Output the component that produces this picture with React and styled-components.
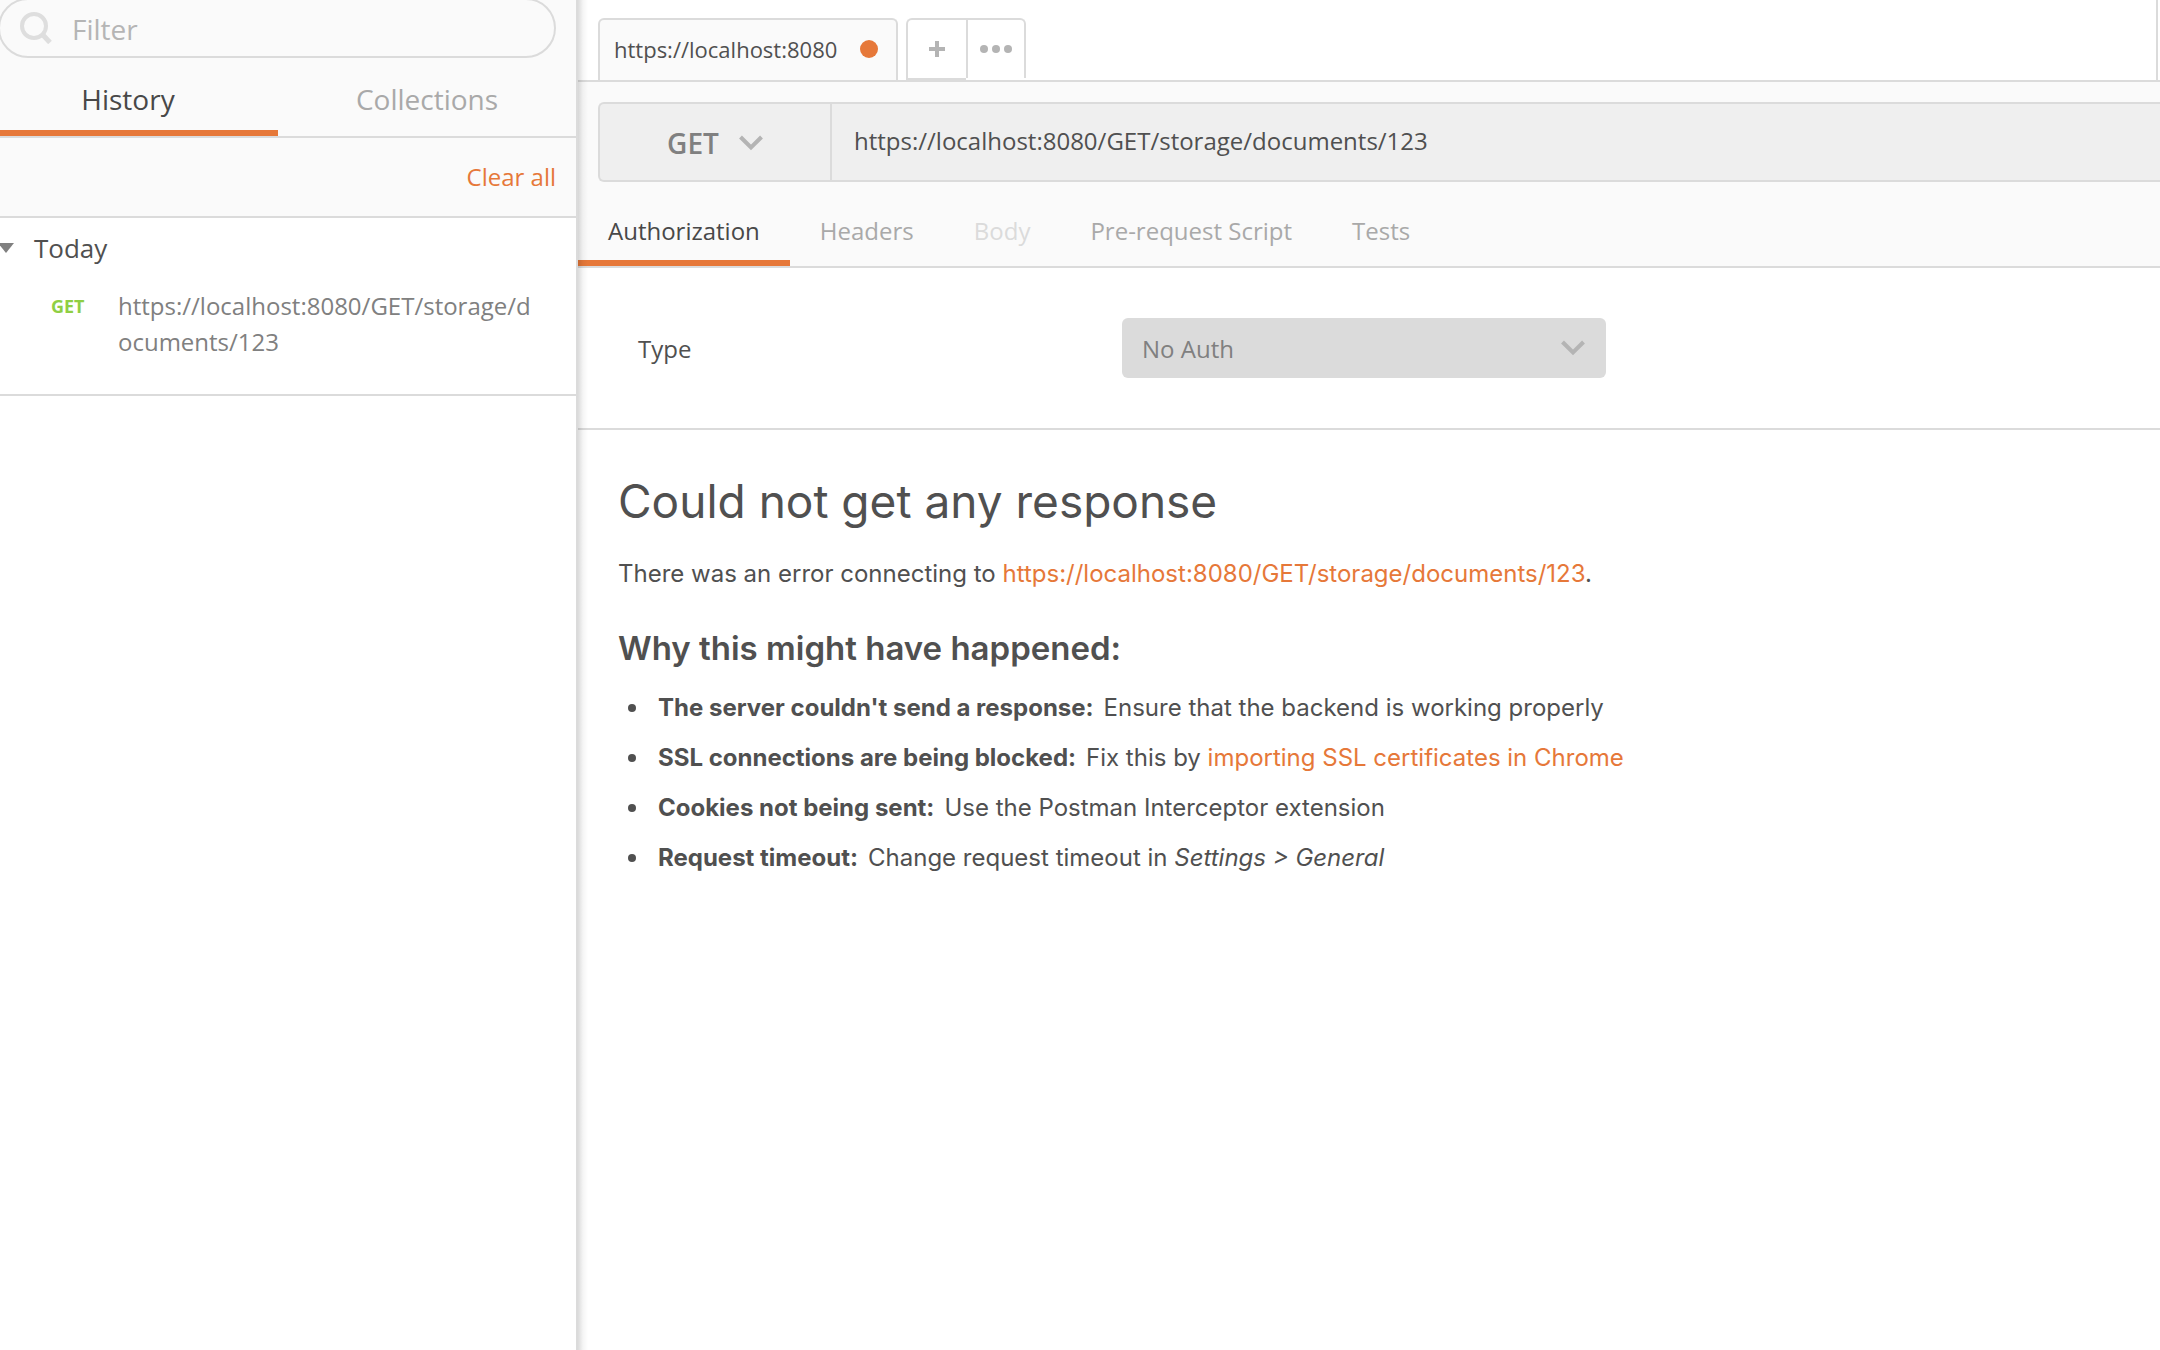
import React from "react";
import styled, { createGlobalStyle } from "styled-components";

const line = "#dbdbdb";
const orange = "#e67839";
const dark = "#505050";
const muted = "#a9a9a9";
const pale = "#fafafa";

const GlobalStyle = createGlobalStyle`
  *, *::before, *::after { box-sizing: border-box; }
  body { margin: 0; background: #fff; color: ${dark}; font-family: "Open Sans", "Noto Sans", sans-serif; font-size: 24px; }
  button, input, select { font: inherit; color: inherit; margin: 0; }
  button { background: none; border: 0; padding: 0; cursor: pointer; }
  h1, h2, p, ul { margin: 0; padding: 0; }
  a { color: ${orange}; text-decoration: none; }
`;

const Page = styled.div`
  display: flex;
  min-height: 100vh;
  overflow: hidden;
`;

/* Sidebar */

const Sidebar = styled.aside`
  flex: 0 0 578px;
  border-right: 2px solid ${line};
`;

const SidebarHead = styled.div`
  background: ${pale};
  overflow: hidden;
`;

const FilterBox = styled.label`
  display: flex;
  align-items: center;
  gap: 20px;
  height: 60px;
  margin: -2px 20px 0 -2px;
  padding: 0 20px;
  border: 2px solid ${line};
  border-radius: 30px;
  font-size: 28px;
`;

const FilterInput = styled.input`
  flex: 1;
  min-width: 0;
  padding: 2px 0 0;
  border: 0;
  outline: 0;
  background: none;
  &::placeholder { color: #b5b5b5; opacity: 1; }
`;

const SideTabs = styled.div`
  display: grid;
  grid-template-columns: 278px 1fr;
  height: 80px;
  border-bottom: 2px solid ${line};
`;

const SideTab = styled.button`
  font-size: 28px;
  padding: ${(p) => (p.$active ? "10px 22px 0 0" : "10px 0 0")};
  border-bottom: 6px solid ${(p) => (p.$active ? orange : "transparent")};
  color: ${(p) => (p.$active ? "#484848" : muted)};
`;

const ClearRow = styled.div`
  display: flex;
  justify-content: flex-end;
  height: 80px;
  padding: 0 20px 2px;
  border-bottom: 2px solid ${line};
`;

const ClearButton = styled.button`
  color: ${orange};
`;

const HistoryGroup = styled.section`
  border-bottom: 2px solid ${line};
  padding-bottom: 34px;
`;

const GroupHead = styled.button`
  display: flex;
  align-items: center;
  gap: 20px;
  height: 60px;
  font-size: 26px;
`;

const HistoryItem = styled.div`
  display: grid;
  grid-template-columns: 67px 1fr;
  padding: 10px 40px 0 51px;
  line-height: 36px;
`;

const Method = styled.span`
  font-size: 18px;
  font-weight: 700;
  color: #8fcf44;
`;

const HistoryUrl = styled.span`
  color: #808080;
  overflow-wrap: anywhere;
`;

/* Request area */

const Main = styled.main`
  flex: 1;
  min-width: 0;
  position: relative;
  &::before {
    content: "";
    position: absolute;
    inset: 0 auto 0 0;
    width: 10px;
    background: linear-gradient(to right, rgba(0, 0, 0, 0.14), rgba(0, 0, 0, 0.04) 50%, rgba(0, 0, 0, 0));
    pointer-events: none;
  }
`;

const TabStrip = styled.div`
  display: flex;
  justify-content: space-between;
  height: 82px;
  border-bottom: 2px solid ${line};
`;

const TabList = styled.div`
  display: flex;
  gap: 8px;
  padding: 18px 0 0 20px;
`;

const RequestTab = styled.button`
  display: flex;
  align-items: center;
  justify-content: space-between;
  width: 300px;
  padding: 0 18px 2px 14px;
  border: 2px solid ${line};
  border-bottom: 0;
  border-radius: 6px 6px 0 0;
  background: ${pale};
  font-size: 22px;
`;

const UnsavedDot = styled.span`
  width: 18px;
  height: 18px;
  border-radius: 50%;
  background: ${orange};
`;

const TabActions = styled.div`
  display: grid;
  grid-template-columns: 60px 60px;
`;

const TabAction = styled.button`
  display: grid;
  place-items: center;
  height: ${(p) => (p.$more ? "60px" : "62px")};
  border: 2px solid ${line};
  border-right-width: ${(p) => (p.$more ? "2px" : "0")};
  border-bottom-width: ${(p) => (p.$more ? "0" : "2px")};
  border-radius: ${(p) => (p.$more ? "0 6px 0 0" : "6px 0 0 0")};
`;

const EnvironmentEdge = styled.div`
  width: 4px;
  border-left: 2px solid ${line};
`;

const Builder = styled.div`
  background: ${pale};
  border-bottom: 2px solid ${line};
`;

const UrlRow = styled.div`
  padding: 20px 0 0 20px;
`;

const UrlBar = styled.div`
  display: flex;
  height: 80px;
  border: 2px solid ${line};
  border-right: 0;
  border-radius: 6px 0 0 6px;
  background: #efefef;
`;

const MethodButton = styled.button`
  display: flex;
  align-items: center;
  justify-content: center;
  gap: 20px;
  width: 232px;
  padding-top: 2px;
  border-right: 2px solid ${line};
  font-size: 28px;
  font-weight: 600;
  color: #808080;
`;

const UrlInput = styled.input`
  flex: 1;
  min-width: 0;
  padding: 0 22px 4px;
  border: 0;
  outline: 0;
  background: none;
`;

const BuilderTabs = styled.div`
  display: flex;
  height: 84px;
`;

const BuilderTab = styled.button`
  padding: 18px 30px 0;
  border-bottom: 6px solid ${(p) => (p.$active ? orange : "transparent")};
  color: ${(p) => (p.$active ? "#484848" : p.disabled ? line : muted)};
`;

const AuthRow = styled.div`
  display: grid;
  grid-template-columns: 484px 484px;
  align-items: center;
  height: 162px;
  padding: 0 60px;
  border-bottom: 2px solid ${line};
`;

const SelectBox = styled.div`
  display: grid;
  align-items: center;
  color: #808080;
  & > * { grid-area: 1 / 1; }
  & > svg { justify-self: end; margin-right: 21px; pointer-events: none; }
`;

const TypeSelect = styled.select`
  appearance: none;
  width: 100%;
  height: 60px;
  padding: 0 20px;
  border: 0;
  border-radius: 6px;
  background: ${line};
`;

/* Response area */

const Response = styled.section`
  padding: 40px;
  font-family: Inter, "Liberation Sans", sans-serif;
  line-height: 50px;
`;

const Title = styled.h1`
  font-size: 46px;
  font-weight: 400;
  line-height: 62px;
`;

const Message = styled.p`
  padding: 17px 0 14px;
`;

const Subtitle = styled.h2`
  padding: 10px 0;
  font-size: 33px;
  font-weight: 600;
  line-height: 50px;
`;

const Reasons = styled.ul`
  list-style: none;
`;

const Reason = styled.li`
  display: flex;
  align-items: center;
  padding-left: 10px;
  &::before {
    content: "";
    width: 8px;
    height: 8px;
    margin-right: 22px;
    border-radius: 50%;
    background: ${dark};
  }
`;

const Cause = styled.strong`
  font-weight: 700;
  margin-right: 10px;
`;

const Chevron = () => (
  <svg width="24" height="16" viewBox="0 0 24 16" fill="none" stroke="#b4b4b4" strokeWidth="4" aria-hidden="true">
    <path d="M1.5 2 12 12.5 22.5 2" />
  </svg>
);

const request = "https://localhost:8080/GET/storage/documents/123";

const builderTabs = [
  { name: "Authorization", active: true },
  { name: "Headers" },
  { name: "Body", disabled: true },
  { name: "Pre-request Script" },
  { name: "Tests" },
];

const reasons = [
  { cause: "The server couldn't send a response:", fix: "Ensure that the backend is working properly" },
  {
    cause: "SSL connections are being blocked:",
    fix: <>Fix this by <a href="#certificates">importing SSL certificates in Chrome</a></>,
  },
  { cause: "Cookies not being sent:", fix: "Use the Postman Interceptor extension" },
  { cause: "Request timeout:", fix: <>Change request timeout in <em>Settings &gt; General</em></> },
];

export default function App() {
  return (
    <Page>
      <GlobalStyle />
      <Sidebar>
        <SidebarHead>
          <FilterBox>
            <svg width="32" height="32" viewBox="0 0 32 32" fill="none" stroke="#dedede" strokeWidth="4" aria-hidden="true">
              <circle cx="14" cy="14" r="12" />
              <path d="m22.5 22.5 7.5 8" strokeWidth="5" />
            </svg>
            <FilterInput type="text" placeholder="Filter" aria-label="Filter" />
          </FilterBox>
          <SideTabs>
            <SideTab $active>History</SideTab>
            <SideTab>Collections</SideTab>
          </SideTabs>
          <ClearRow>
            <ClearButton>Clear all</ClearButton>
          </ClearRow>
        </SidebarHead>
        <HistoryGroup>
          <GroupHead>
            <svg width="14" height="10" viewBox="0 0 14 10" fill="#808080" aria-hidden="true">
              <path d="M-2 0h16L6 10z" />
            </svg>
            Today
          </GroupHead>
          <HistoryItem>
            <Method>GET</Method>
            <HistoryUrl>{request}</HistoryUrl>
          </HistoryItem>
        </HistoryGroup>
      </Sidebar>

      <Main>
        <TabStrip>
          <TabList>
            <RequestTab>
              https://localhost:8080
              <UnsavedDot />
            </RequestTab>
            <TabActions>
              <TabAction aria-label="New tab">
                <svg width="16" height="16" viewBox="0 0 16 16" stroke="#b4b4b4" strokeWidth="4" aria-hidden="true">
                  <path d="M8 0v16M0 8h16" />
                </svg>
              </TabAction>
              <TabAction $more aria-label="More">
                <svg width="32" height="8" viewBox="0 0 32 8" fill="#b4b4b4" aria-hidden="true">
                  <circle cx="4" cy="4" r="4" />
                  <circle cx="16" cy="4" r="4" />
                  <circle cx="28" cy="4" r="4" />
                </svg>
              </TabAction>
            </TabActions>
          </TabList>
          <EnvironmentEdge />
        </TabStrip>

        <Builder>
          <UrlRow>
            <UrlBar>
              <MethodButton>
                GET
                <Chevron />
              </MethodButton>
              <UrlInput type="text" defaultValue={request} aria-label="Request URL" />
            </UrlBar>
          </UrlRow>
          <BuilderTabs>
            {builderTabs.map((t) => (
              <BuilderTab key={t.name} $active={t.active} disabled={t.disabled}>{t.name}</BuilderTab>
            ))}
          </BuilderTabs>
        </Builder>

        <AuthRow>
          <label htmlFor="auth-type">Type</label>
          <SelectBox>
            <TypeSelect id="auth-type">
              <option>No Auth</option>
            </TypeSelect>
            <Chevron />
          </SelectBox>
        </AuthRow>

        <Response>
          <Title>Could not get any response</Title>
          <Message>
            There was an error connecting to <a href="#request">{request}</a>.
          </Message>
          <Subtitle>Why this might have happened:</Subtitle>
          <Reasons>
            {reasons.map((r) => (
              <Reason key={r.cause}>
                <Cause>{r.cause}</Cause>
                <span>{r.fix}</span>
              </Reason>
            ))}
          </Reasons>
        </Response>
      </Main>
    </Page>
  );
}
